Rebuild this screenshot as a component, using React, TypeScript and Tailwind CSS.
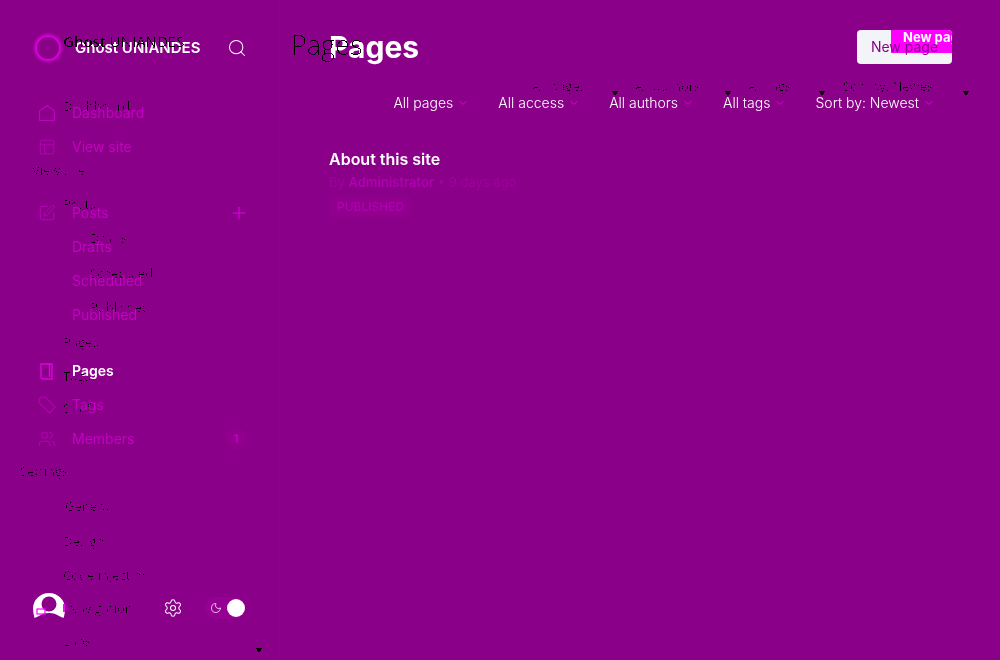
import React from "react";
import { PanelsTopLeft, SquarePen, Plus, Users, Search, Settings, Moon, ChevronDown } from "lucide-react";

const font = { fontFamily: "Inter, sans-serif" };

const filters = ["All pages", "All access", "All authors", "All tags", "Sort by: Newest"];

const ghostLabels = [
  { x: 63, y: 97, text: "Dashboard" },
  { x: 32, y: 161, text: "View site" },
  { x: 63, y: 195, text: "Posts" },
  { x: 90, y: 229, text: "Drafts" },
  { x: 90, y: 264, text: "Scheduled" },
  { x: 90, y: 298, text: "Published" },
  { x: 63, y: 333, text: "Pages" },
  { x: 63, y: 367, text: "Tags" },
  { x: 63, y: 399, text: "Staff" },
  { x: 20, y: 462, text: "Settings" },
  { x: 65, y: 497, text: "General" },
  { x: 63, y: 532, text: "Design" },
  { x: 63, y: 566, text: "Code injection" },
  { x: 68, y: 599, text: "Navigation" },
  { x: 63, y: 632, text: "Labs" },
  { x: 532, y: 77, text: "All pages" },
  { x: 635, y: 77, text: "All authors" },
  { x: 748, y: 77, text: "All tags" },
  { x: 843, y: 77, text: "Sort by: Newest" },
];

const carets = [
  { x: 611, y: 91 },
  { x: 724, y: 91 },
  { x: 818, y: 91 },
  { x: 962, y: 91 },
  { x: 255, y: 648 },
];

function NavItem({ icon, label, active, right }: { icon?: React.ReactNode; label: string; active?: boolean; right?: React.ReactNode }) {
  return (
    <div className="flex h-[34px] items-center">
      <div className="flex w-[28px] justify-center">{icon}</div>
      <span className={`ml-[11px] text-sm ${active ? "font-semibold text-white" : "font-normal text-[#c400c4]"}`}>{label}</span>
      {right && <div className="ml-auto">{right}</div>}
    </div>
  );
}

function HomeIcon() {
  return (
    <svg width="18" height="18" viewBox="0 0 18 18" fill="none" stroke="#c000c0" strokeWidth="1.2">
      <path d="M1.500 7 9 1.500 16.500 7v9.500h-15z" strokeLinejoin="round" />
    </svg>
  );
}

function PageIcon() {
  return (
    <svg width="18" height="18" viewBox="0 0 18 18" fill="none" stroke="#e000e0" strokeWidth="1.4">
      <path d="M3 2h11v15H5.500Q3 17 3 14.500z" strokeLinejoin="round" />
      <path d="M11.500 2v13" />
    </svg>
  );
}

function TagIcon() {
  return (
    <svg width="18" height="18" viewBox="0 0 18 18" fill="none" stroke="#b000b0" strokeWidth="1.2">
      <path d="M1 3.500 3.500 1h3.800l9.700 10-5.500 6L1.500 7z" strokeLinejoin="round" />
    </svg>
  );
}

function Avatar() {
  return (
    <svg width="32" height="32" viewBox="0 0 32 32">
      <path d="M16 1a16 16 0 0 1 16 15c0 4-.5 7-1.500 10L26 24q-4-3-10-3t-10 3l-4.500 2Q0 21 0 16A16 16 0 0 1 16 1z" fill="#fff" />
      <circle cx="16" cy="12" r="7.500" fill="#8b0088" />
      <rect x="4" y="17" width="8" height="5" fill="none" stroke="#ff00ff" strokeWidth="1.200" />
      <rect x="30" y="12" width="2" height="8" fill="#ff00ff" />
    </svg>
  );
}

export default function App() {
  return (
    <div className="relative flex h-[660px] w-[1000px] overflow-hidden bg-[#8b0088] text-white" style={font}>
      <aside className="flex w-[280px] flex-col border-r border-[#8f008c] pl-[33px] pr-[32px] pt-[32px]">
        <div className="flex h-[32px] items-center">
          <div className="flex h-[30px] w-[30px] items-center justify-center rounded-full border-[2px] border-[#ac00ac]">
            <div className="h-[26px] w-[26px] rounded-full border-[2px] border-[#d800d8]" />
          </div>
          <span className="ml-[12px] text-[15px] font-semibold">Ghost UNIANDES</span>
          <Search className="ml-auto h-5 w-5" strokeWidth={1.25} />
        </div>
        <nav className="mt-[32px] flex flex-col">
          <NavItem label="Dashboard" icon={<HomeIcon />} />
          <NavItem label="View site" icon={<PanelsTopLeft className="h-[18px] w-[18px] text-[#b000b0]" strokeWidth={1.5} />} />
          <div className="h-[32px]" />
          <NavItem label="Posts" icon={<SquarePen className="h-[18px] w-[18px] text-[#c000c0]" strokeWidth={1.25} />} right={<Plus className="mr-[-2px] h-5 w-5 text-[#e000e0]" strokeWidth={1.25} />} />
          <NavItem label="Drafts" />
          <NavItem label="Scheduled" />
          <NavItem label="Published" />
          <div className="h-[22px]" />
          <NavItem label="Pages" active icon={<PageIcon />} />
          <NavItem label="Tags" icon={<TagIcon />} />
          <NavItem
            label="Members"
            icon={<Users className="h-[18px] w-[18px] text-[#b000b0]" strokeWidth={1.5} />}
            right={<span className="flex h-[22px] w-[22px] items-center justify-center rounded-full bg-[#90008d] text-xs font-semibold text-[#c000c0]">1</span>}
          />
        </nav>
        <div className="mt-auto mb-[36px] flex items-center">
          <Avatar />
          <Settings className="ml-[98px] h-5 w-5 text-white" strokeWidth={1.25} />
          <div className="ml-[22px] flex h-[22px] w-[40px] items-center justify-between rounded-full bg-[#950092] pl-[5px]">
            <Moon className="h-3 w-3" strokeWidth={1.5} />
            <div className="h-[18px] w-[18px] rounded-full bg-white" />
          </div>
        </div>
      </aside>
      <main className="flex-1 pl-[49px] pr-[48px] pt-[30px]">
        <div className="flex h-[34px] items-center justify-between">
          <h1 className="text-[30px] font-bold">Pages</h1>
          <div className="relative flex h-[34px] w-[95px] items-center justify-center overflow-hidden rounded bg-[#f3f4f8] text-sm text-[#8b0088]">
            <div className="absolute right-0 top-0 h-[23px] w-[61px] overflow-hidden whitespace-nowrap bg-[#ff00ff] pl-[12px] text-[13px] font-bold leading-[14px] text-white">New page</div>
            <span className="relative">New page</span>
          </div>
        </div>
        <div className="mt-[29px] flex justify-end gap-[29px] pr-[17px] text-sm font-light">
          {filters.map((f) => (
            <div key={f} className="flex items-center gap-[4px]">
              {f}
              <ChevronDown className="h-3 w-3 text-[#e000e0]" />
            </div>
          ))}
        </div>
        <div className="mt-[34px] text-base font-semibold">About this site</div>
        <div className="mt-[2px] text-[13px] text-[#a000a0]">
          By <span className="font-semibold text-[#b000b0]">Administrator</span> • 9 days ago
        </div>
        <div className="mt-[4px] inline-block rounded bg-[#90008d] px-[8px] py-[2px] text-xs font-medium text-[#b000b0]">PUBLISHED</div>
      </main>
      {/* unstyled copy of the page underneath, only the darkest pixels of its text survive */}
      <div className="pointer-events-none absolute inset-0 bg-white text-[13px] text-black mix-blend-multiply [filter:brightness(4.5)_contrast(40)]" style={{ fontFamily: "'Open Sans', sans-serif" }}>
        {ghostLabels.map((g) => (
          <span key={`${g.x}-${g.y}`} className="absolute whitespace-pre" style={{ left: g.x, top: g.y }}>
            {g.text}
          </span>
        ))}
        {carets.map((c) => (
          <svg key={`${c.x}-${c.y}`} className="absolute" style={{ left: c.x, top: c.y }} width="8" height="5" viewBox="0 0 8 5">
            <polygon points="0,0 8,0 4,5" fill="#000" />
          </svg>
        ))}
      </div>
      <div className="pointer-events-none absolute inset-0 bg-white text-black mix-blend-multiply [filter:brightness(1.4)_contrast(40)]" style={{ fontFamily: "'Open Sans', sans-serif" }}>
        <span className="absolute left-[63px] top-[30px] whitespace-pre text-[15px]">
          <span className="font-semibold">Ghost</span> UNIANDES
        </span>
        <span className="absolute left-[291px] top-[25px] whitespace-pre text-[27px] font-light">Pages</span>
      </div>
    </div>
  );
}
